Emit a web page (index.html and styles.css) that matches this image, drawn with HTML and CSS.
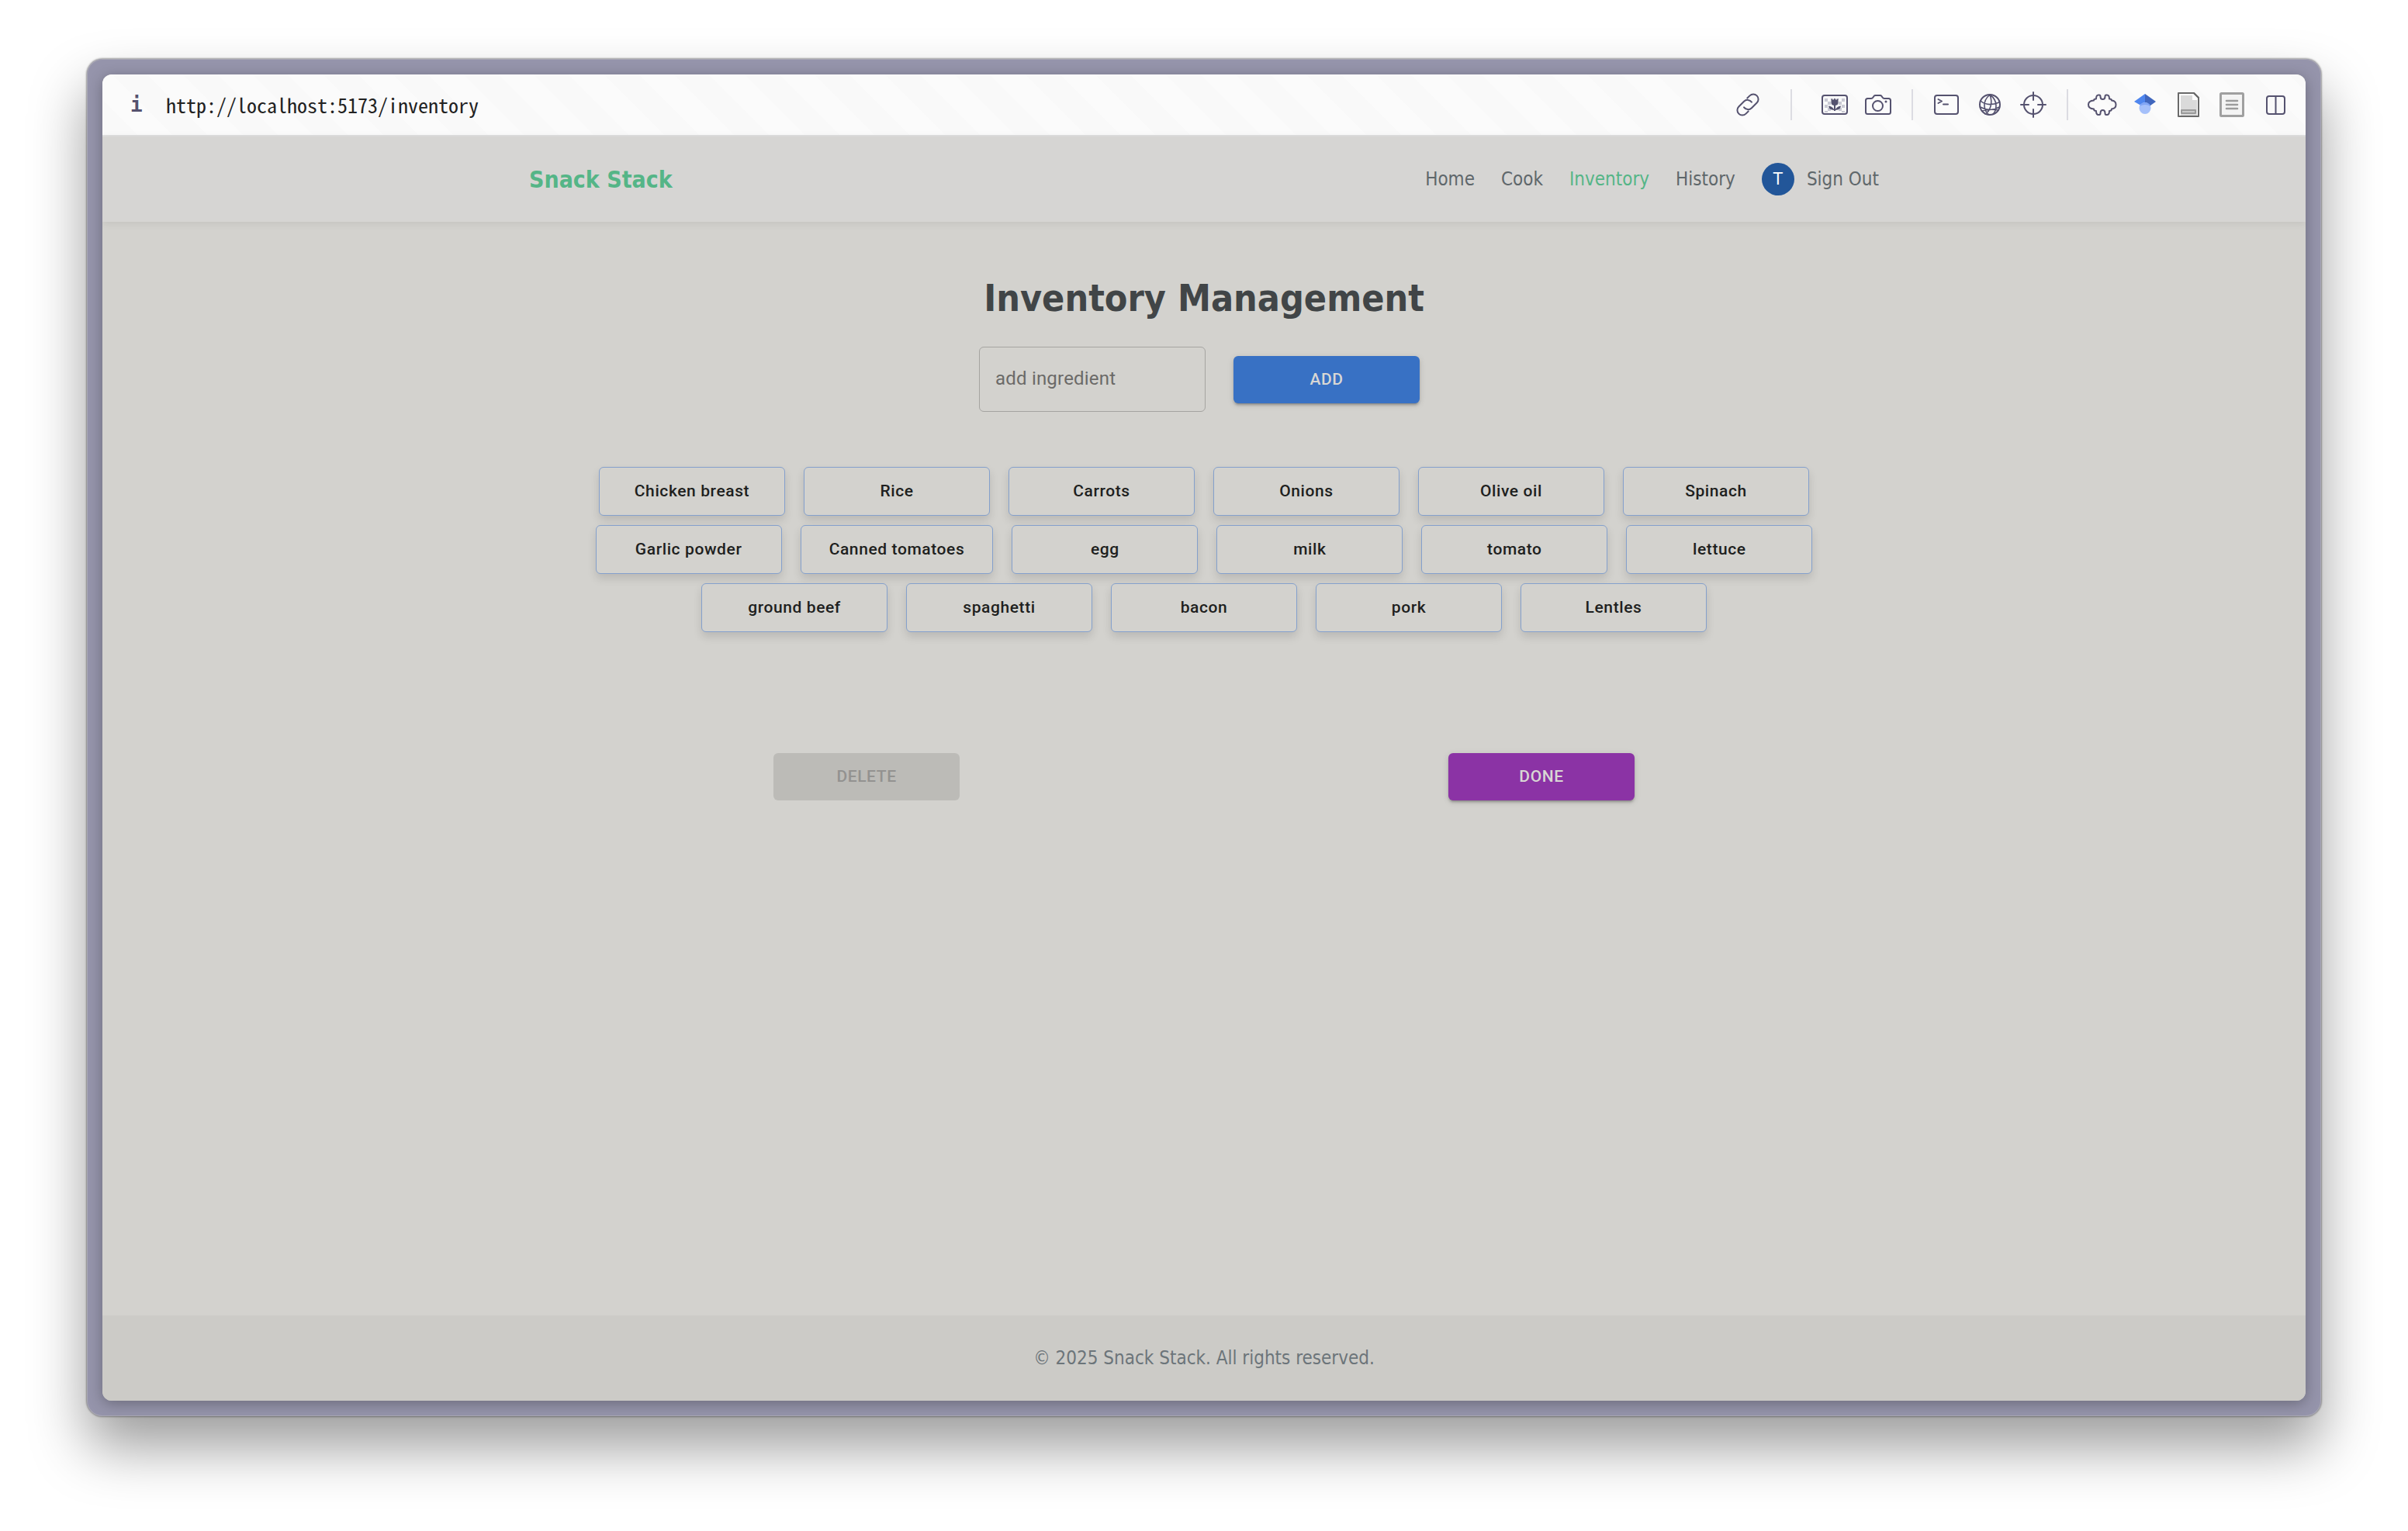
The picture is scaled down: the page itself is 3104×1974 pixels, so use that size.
FILE: index.html
```html
<!DOCTYPE html>
<html lang="en">
<head>
<meta charset="utf-8">
<title>Snack Stack</title>
<link rel="stylesheet" href="styles.css">
</head>
<body>
<div class="frame">
<div class="window">
  <div class="toolbar">
    <span class="info">i</span>
    <span class="url">http://localhost:5173/inventory</span>
    <div class="tools">
      <button class="tool tool-link" aria-label="Copy link"><svg viewBox="0 0 40 40"><g transform="rotate(-45 20 20)"><path d="M14.500 26.500H10a6.500 6.500 0 0 1 0-13h9.500a6.500 6.500 0 0 1 6.400 7.600M25.500 13.500H30a6.500 6.500 0 0 1 0 13h-9.500a6.500 6.500 0 0 1-6.400-7.600"/></g></svg></button>
      <span class="sep"></span>
      <div class="group group-first">
        <button class="tool" aria-label="Picture"><svg viewBox="0 0 40 40"><g fill="#c9c9d3" stroke="none"><path d="M7 12h4v4H7zM11 16h4v4h-4zM7 20h4v4H7zM11 24h4v4h-4zM7 28h4v2H7zM29 12h4v4h-4zM25 16h4v4h-4zM29 20h4v4h-4zM25 24h4v4h-4zM29 28h4v2h-4zM15 12h3v2h-3zM22 12h3v2h-3z"/></g><rect x="4" y="8" width="32" height="24" rx="3"/><path fill="#55526f" stroke="none" d="M15.500 12l2.500 2 2-2.500 2 2.500 2.500-2v5.500q0 3-3.500 3.500v5q2-4 7-4.500-.5 5-7 5.500v1h-2v-1q-6.500-.5-7-5.500 5 .5 7 4.500v-5q-3.500-.5-3.500-3.500z"/></svg></button>
        <button class="tool" aria-label="Screenshot"><svg viewBox="0 0 40 40"><path d="M6.500 12H11q1.500 0 2.500-1.500L14.500 9q.7-1 2-1h6q1.300 0 2 1l1 1.500q1 1.500 2.500 1.500h5.500q2.500 0 2.500 2.500v15q0 2.500-2.500 2.500h-27Q4 32 4 29.500v-15Q4 12 6.500 12z"/><circle cx="19.500" cy="21.500" r="6.500"/><circle cx="30" cy="16" r="1.500" fill="#55526f" stroke="none"/></svg></button>
      </div>
      <span class="sep"></span>
      <div class="group">
        <button class="tool" aria-label="Console"><svg viewBox="0 0 40 40"><rect x="5" y="8" width="30" height="24" rx="3"/><path d="M9.500 13l4.500 2.500-4.500 2.500M16 19.500h6"/></svg></button>
        <button class="tool" aria-label="Network"><svg viewBox="0 0 40 40"><circle cx="20" cy="20" r="13"/><path stroke-width="1.600" d="M20 7q-8 7-7 15t6 11M20 7q3 8 1 15t-7 10M20 7q8 6 8 14t-4 11M8 15q9 8 24 2M7.500 23q13 7 25 0M10 28q10-3 21-1"/></svg></button>
        <button class="tool" aria-label="Inspect"><svg viewBox="0 0 40 40"><circle cx="20" cy="20" r="12"/><path d="M20 4v10M20 26v10M4 20h10M26 20h10"/></svg></button>
      </div>
      <span class="sep"></span>
      <div class="group">
        <button class="tool" aria-label="Extensions"><svg viewBox="0 0 40 40"><path d="M10 14.500q0-2 3-2 0-5 3-5h1q1.500 0 1.500 2 0 3.500 3 3.500t3-3.500q0-2 1.500-2h1q3 0 3 5 3 0 3 2 5.500.5 5.500 5.500t-5.500 5.500q0 2.500-3 2.500 0 5-3 5h-1q-1.500 0-1.500-2 0-4-3-4t-3 4q0 2-1.500 2h-1q-3 0-3-5-3 0-3-2.500Q3 25 3 20t7-5.500z"/></svg></button>
        <button class="tool" aria-label="Scholar"><svg viewBox="0 0 40 40"><g stroke="none"><path fill="#4f86ee" d="M20 6v18L6 16z"/><path fill="#4066bd" d="M20 6l14 10-14 10z"/><circle cx="20" cy="24.500" r="7.500" fill="#a5c0fa"/><path fill="#7fa4f5" d="M13 22a7.500 7.500 0 0 1 14 0q-7-4-14 0z"/></g></svg></button>
        <button class="tool" aria-label="Document"><svg viewBox="0 0 40 40"><path d="M7 5h20l6 6v24H7z" fill="#fff" stroke="#6a6a6a"/><path d="M10 8h15v6h6v20H10z" fill="#dadada" stroke="none"/><path d="M25 7v7h7z" fill="#fff" stroke="none"/><path d="M27 5l6 6" stroke="#6a6a6a"/><rect x="11" y="27" width="18" height="4" fill="#c8c8c8" stroke="#9a9a9a"/></svg></button>
        <button class="tool" aria-label="Reader"><svg viewBox="0 0 40 40"><rect x="5.500" y="5.500" width="29" height="29" rx="1" fill="#f4f4f4" stroke="#a0a0a0" stroke-width="3"/><path stroke="#9c9c9c" stroke-width="2.600" d="M13 15h14M13 20h14M13 25h14"/></svg></button>
        <button class="tool" aria-label="Split view"><svg viewBox="0 0 40 40"><rect x="9" y="9" width="23" height="23" rx="3"/><path d="M20.500 9v23"/></svg></button>
      </div>
    </div>
  </div>
  <header class="site-header">
    <div class="container">
      <a class="logo" href="#">Snack Stack</a>
      <nav class="nav">
        <a href="#">Home</a>
        <a href="#">Cook</a>
        <a class="active" href="#">Inventory</a>
        <a href="#">History</a>
        <span class="account"><span class="avatar">T</span><a href="#">Sign Out</a></span>
      </nav>
    </div>
  </header>
  <main class="main">
    <h1>Inventory Management</h1>
    <form class="add-form">
      <div class="field">
        <input id="ingredient" type="text">
        <label for="ingredient">add ingredient</label>
      </div>
      <button class="btn btn-add" type="button">ADD</button>
    </form>
    <div class="ingredients">
      <button class="chip">Chicken breast</button>
      <button class="chip">Rice</button>
      <button class="chip">Carrots</button>
      <button class="chip">Onions</button>
      <button class="chip">Olive oil</button>
      <button class="chip">Spinach</button>
      <button class="chip">Garlic powder</button>
      <button class="chip">Canned tomatoes</button>
      <button class="chip">egg</button>
      <button class="chip">milk</button>
      <button class="chip">tomato</button>
      <button class="chip">lettuce</button>
      <button class="chip">ground beef</button>
      <button class="chip">spaghetti</button>
      <button class="chip">bacon</button>
      <button class="chip">pork</button>
      <button class="chip">Lentles</button>
    </div>
    <div class="actions">
      <button class="btn" disabled>DELETE</button>
      <button class="btn btn-done">DONE</button>
    </div>
  </main>
  <footer class="site-footer">© 2025 Snack Stack. All rights reserved.</footer>
</div>
</div>
</body>
</html>
```
FILE: styles.css
```css
* { box-sizing: border-box; }

body {
  margin: 0;
  min-height: 100vh;
  padding: 76px 112px 148px;
  display: flex;
  background: #fff;
  font-family: "DejaVu Sans Condensed", "DejaVu Sans", sans-serif;
  font-size: 24px;
  color: #5f676b;
}

a { color: inherit; text-decoration: none; }

.frame {
  flex: 1;
  display: flex;
  padding: 20px;
  border-radius: 20px;
  background: #9594ab;
  box-shadow: inset 0 0 0 1px #a9a8b4, 0 0 2px 1px rgba(0, 0, 0, .35), 0 40px 72px rgba(0, 0, 0, .39);
}

.window {
  flex: 1;
  display: flex;
  flex-direction: column;
  border-radius: 12px;
  overflow: hidden;
  background: #d3d2ce;
  box-shadow: 0 4px 18px rgba(0, 0, 0, .28);
}

.toolbar {
  display: flex;
  align-items: center;
  height: 80px;
  padding: 0 19px 0 36px;
  border-bottom: 2px solid #e0e0e0;
  background: repeating-linear-gradient(45deg, #f9f9f9 0 32px, #fbfbfb 32px 64px);
}

.info {
  width: 46px;
  color: #55526f;
  font: 700 26px "DejaVu Sans Mono", monospace;
}
.url {
  color: #222;
  font: 26px/36px "Noto Sans Mono CJK SC", "Liberation Mono", monospace;
}

.tools { margin-left: auto; display: flex; align-items: center; gap: 23px; }
.group { display: flex; gap: 16px; }
.group-first { margin-left: 12px; }
.tool-link { margin-right: 12px; }
.sep { width: 2px; height: 40px; background: #dcdce2; }

.tool { width: 40px; height: 40px; padding: 0; border: 0; background: none; }
.tool svg {
  display: block;
  width: 40px;
  height: 40px;
  fill: none;
  stroke: #55526f;
  stroke-width: 2;
  stroke-linecap: round;
  stroke-linejoin: round;
}

.site-header {
  height: 110px;
  background: #d6d5d3;
  box-shadow: 0 2px 10px rgba(0, 0, 0, .08);
}

.container {
  height: 100%;
  max-width: 1740px;
  margin: 0 auto;
  display: flex;
  align-items: center;
  justify-content: space-between;
}

.logo { color: #55b587; font-size: 30px; font-weight: 700; }
.nav { display: flex; align-items: center; gap: 34px; }
.active { color: #55b587; }
.account { display: flex; align-items: center; gap: 16px; }

.avatar {
  width: 42px;
  height: 42px;
  border-radius: 50%;
  background: #225699;
  color: #fff;
  font-size: 22px;
  line-height: 42px;
  text-align: center;
}

.main { flex: 1; }

h1 {
  margin: 0;
  padding-top: 62px;
  color: #414547;
  font-size: 48px;
  line-height: 72px;
  text-align: center;
}

.add-form {
  display: flex;
  justify-content: center;
  align-items: center;
  gap: 36px;
  margin: 27px 12px 0 0;
}

.field {
  position: relative;
  font: 24px/82px Roboto, sans-serif;
  letter-spacing: .2px;
}

.field label {
  position: absolute;
  left: 21px;
  top: 0;
  color: #6b6a68;
}

input {
  display: block;
  width: 292px;
  height: 84px;
  padding: 0 21px;
  border: 1px solid #a5a4a1;
  border-radius: 6px;
  background: transparent;
  font: inherit;
}

.btn, .chip {
  min-width: 240px;
  padding: 12px 36px;
  border: 0;
  border-radius: 6px;
  font: 500 21px/37px Roboto, sans-serif;
  letter-spacing: .6px;
}

.btn { background: #bcbbb7; color: #939290; }
.btn-add, .btn-done {
  color: #d8d7d4;
  box-shadow: 0 4px 2px -3px rgba(0, 0, 0, .2), 0 3px 3px rgba(0, 0, 0, .14), 0 2px 8px rgba(0, 0, 0, .12);
}
.btn-add { background: #3871c4; }
.btn-done { background: #8b33a5; }

.ingredients {
  max-width: 1600px;
  margin: 71px auto 0;
  display: flex;
  flex-wrap: wrap;
  justify-content: center;
  gap: 12px 24px;
}

.chip {
  border: 1px solid #84a0cc;
  background: #d3d2ce;
  color: #1e1f20;
  box-shadow: 0 6px 12px rgba(0, 0, 0, .12);
}

.actions {
  max-width: 1740px;
  margin: 156px auto 0;
  display: flex;
  justify-content: space-around;
}

.site-footer {
  background: #cccbc7;
  color: #6c757a;
  line-height: 110px;
  text-align: center;
}
```
